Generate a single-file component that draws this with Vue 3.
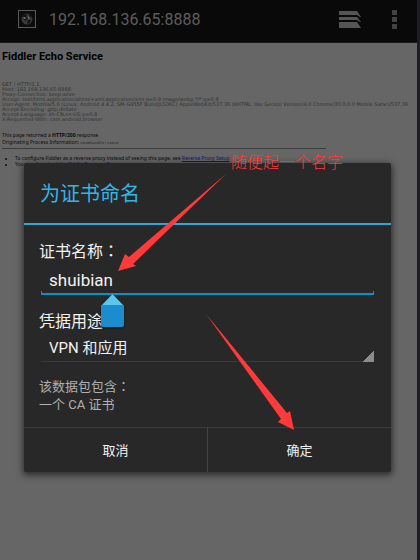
<template>
	<div class="screen">
		<header class="browser-bar">
			<svg class="site-icon" viewBox="0 0 18 18">
				<rect x="0.5" y="0.5" width="17" height="17" fill="#0c0c0c" stroke="#5a5a5a" />
				<circle cx="9" cy="9" r="5.5" fill="#3a3a3a" />
				<path d="M4 6l3-2 2 1-1 2 2 1-2 3-2-1-1-2zM10 4l3 1 1 3-2-1zM10 10l3 0-1 3-3 1z" fill="#141414" />
				<path d="M5 7l2 0 1 2-2 0zM10 6l2 2-2 1z" fill="#6a6a6a" />
			</svg>
			<input class="url" v-model="url" type="text" aria-label="URL">
			<button class="bar-button" aria-label="Tabs">
				<svg width="22" height="18" viewBox="0 0 22 18">
					<path d="M0 1h18l4 6h-1l-3-2H0zM0 7h18l4 5h-1l-3-2H0zM0 12h18l4 6H0z" fill="#555" />
				</svg>
			</button>
			<button class="bar-button" aria-label="Menu">
				<svg width="5" height="19" viewBox="0 0 5 19">
					<path d="M0 0h5v5H0zM0 7h5v5H0zM0 14h5v5H0z" fill="#434343" />
				</svg>
			</button>
		</header>

		<main class="page">
			<h1>Fiddler Echo Service</h1>
			<pre>{{ request.join('\n') }}</pre>
			<p>This page returned a <b>HTTP/200</b> response</p>
			<p>Originating Process Information: <code>nevmhandle:13328</code></p>
			<hr>
			<ul>
				<li>To configure Fiddler as a reverse proxy instead of seeing this page, see <a href="#">Reverse Proxy Setup</a></li>
				<li>You can download the <a href="#">FiddlerRoot certificate</a></li>
			</ul>
		</main>

		<div class="overlay">
			<form class="dialog" role="dialog" aria-labelledby="dialog-title" @submit.prevent>
				<h2 id="dialog-title">为证书命名</h2>
				<div class="dialog-body">
					<label for="cert-name">证书名称<span class="colon">：</span></label>
					<div class="field">
						<input id="cert-name" v-model="name" type="text">
						<svg class="handle" viewBox="0 0 23 34">
							<path d="M0 12L11.500 0L23 12z" fill="#5cc5ec" />
							<path d="M0 11h23v20a2 2 0 0 1-2 2H2a2 2 0 0 1-2-2z" fill="#1b8dcf" />
						</svg>
					</div>
					<label class="usage-label" for="cert-usage">凭据用途<span class="colon">：</span></label>
					<div class="spinner">
						<select id="cert-usage" v-model="usage">
							<option v-for="item in usages" :key="item">{{ item }}</option>
						</select>
					</div>
					<p class="message">该数据包包含<span class="colon">：</span><br>一个 CA 证书</p>
				</div>
				<div class="actions">
					<button type="button">取消</button>
					<button type="submit">确定</button>
				</div>
				<div class="note">随便起一个名字</div>
				<svg class="arrow arrow-name" viewBox="0 0 109 99">
					<path d="M109 0L15 91L18 93L0 98L7 81L11 84z" />
				</svg>
				<svg class="arrow arrow-ok" viewBox="0 0 88 116">
					<path d="M0 0L81 99L84 97L88 116L72 108L75 105z" />
				</svg>
			</form>
		</div>
	</div>
</template>

<script setup>
import { ref } from 'vue';

const url = ref('192.168.136.65:8888');
const name = ref('shuibian');
const usages = ['VPN 和应用', 'WLAN'];
const usage = ref(usages[0]);

const request = [
	'GET / HTTP/1.1',
	'Host: 192.168.136.65:8888',
	'Proxy-Connection: keep-alive',
	'Accept: text/html,application/xhtml+xml,application/xml;q=0.9,image/webp,*/*;q=0.8',
	'User-Agent: Mozilla/5.0 (Linux; Android 4.4.2; SM-G955F Build/JLS36C) AppleWebKit/537.36 (KHTML, like Gecko) Version/4.0 Chrome/30.0.0.0 Mobile Safari/537.36',
	'Accept-Encoding: gzip,deflate',
	'Accept-Language: zh-CN,en-US;q=0.8',
	'X-Requested-With: com.android.browser',
];
</script>

<style>
body {
	margin: 0;
	background: #1f1f23;
}
</style>

<style scoped>
.screen {
	position: relative;
	display: flex;
	flex-direction: column;
	min-height: 100vh;
	margin-right: 3px;
	overflow: hidden;
	background: #666;
	font-family: Roboto, "Noto Sans CJK SC", sans-serif;
}

button,
input,
select {
	margin: 0;
	padding: 0;
	border: none;
	border-radius: 0;
	outline: none;
	background: none;
	font-family: inherit;
	appearance: none;
}

.browser-bar {
	display: flex;
	align-items: center;
	height: 38px;
	padding: 0 20px 4px 18px;
	background: #090909;
	border-bottom: 1px solid #1c1c1c;
}

.site-icon {
	width: 18px;
	height: 18px;
	margin-right: 13px;
}

.url {
	flex: 1;
	min-width: 0;
	color: #5e5e5e;
	font-size: 16px;
}

.bar-button {
	display: flex;
	margin-left: 31px;
}

.page {
	padding: 8px 0 0 2px;
	color: #0c0c0c;
	font-family: "Noto Sans", sans-serif;
	font-size: 5px;
	line-height: 7px;
}

h1 {
	margin: 0 0 19px;
	color: #000;
	font-family: Roboto, sans-serif;
	font-size: 11px;
	line-height: 12px;
}

pre {
	margin: 0 0 10px;
	color: #333;
	font-family: "DejaVu Sans", sans-serif;
	font-size: 5px;
	line-height: 5px;
}

.page p {
	margin: 0;
}

code {
	color: #222;
	font-family: "Liberation Mono", monospace;
	font-size: 4px;
}

hr {
	width: 78%;
	height: 1px;
	margin: 1px 0 6px;
	border: none;
	background: #3c3c3c;
}

.page ul {
	margin: 0;
	padding-left: 13px;
	line-height: 6px;
}

.page a {
	color: #15157a;
}

.overlay {
	position: absolute;
	inset: 0;
	padding: 163px 26px 0 24px;
}

.dialog {
	position: relative;
	background: #282828;
	border-radius: 2px;
	box-shadow: 0 2px 7px 1px rgba(0, 0, 0, 0.6);
	color: #f3f3f3;
}

h2 {
	margin: 0;
	padding: 2px 16px 0;
	border-bottom: 2px solid #33a5d0;
	color: #33b5e5;
	font-size: 20px;
	font-weight: 400;
	line-height: 58px;
}

.dialog-body {
	padding: 15px 17px 13px 15px;
}

label {
	display: block;
	font-size: 16px;
	line-height: 24px;
}

.colon {
	font-family: "Noto Sans CJK TC", sans-serif;
	line-height: 0;
}

.field {
	position: relative;
	margin-left: 2px;
	border-bottom: 2px solid #0893c5;
}

.field::before {
	content: "";
	position: absolute;
	right: 0;
	bottom: 0;
	left: 0;
	height: 2px;
	border: solid #0893c5;
	border-width: 0 1px;
}

.field input {
	display: block;
	width: 100%;
	height: 29px;
	padding: 3px 8px 0;
	box-sizing: border-box;
	color: #f3f3f3;
	font-size: 17px;
}

.handle {
	position: absolute;
	top: 30px;
	left: 60px;
	width: 23px;
	height: 34px;
	filter: drop-shadow(0 1px 1px rgba(0, 0, 0, 0.6));
}

.usage-label {
	margin-top: 15px;
}

.spinner {
	position: relative;
	margin-left: 2px;
	border-bottom: 1px solid #3b3b3b;
}

.spinner::after {
	content: "";
	position: absolute;
	right: 0;
	bottom: -1px;
	width: 11px;
	height: 11px;
	background: linear-gradient(135deg, transparent 50%, #8c8c8c 50%);
}

.spinner select {
	display: block;
	width: 100%;
	height: 27px;
	padding: 1px 8px 0;
	color: #f3f3f3;
	font-size: 15px;
}

.message {
	margin: 16px 0 0;
	color: #b0b0b0;
	font-size: 13px;
	line-height: 18px;
}

.actions {
	display: flex;
	border-top: 1px solid #3c3c3c;
}

.actions button {
	flex: 1;
	height: 44px;
	padding-bottom: 2px;
	color: #f3f3f3;
	font-size: 13px;
}

.actions button + button {
	border-left: 1px solid #444;
}

.note {
	position: absolute;
	top: -12px;
	left: 207px;
	color: #ff3a3a;
	font-size: 16px;
	font-weight: 300;
	line-height: 24px;
	white-space: nowrap;
}

.arrow {
	position: absolute;
	fill: #ff3a3a;
	pointer-events: none;
}

.arrow-name {
	top: 10px;
	left: 94px;
	width: 109px;
	height: 99px;
}

.arrow-ok {
	top: 151px;
	left: 182px;
	width: 88px;
	height: 116px;
}
</style>
